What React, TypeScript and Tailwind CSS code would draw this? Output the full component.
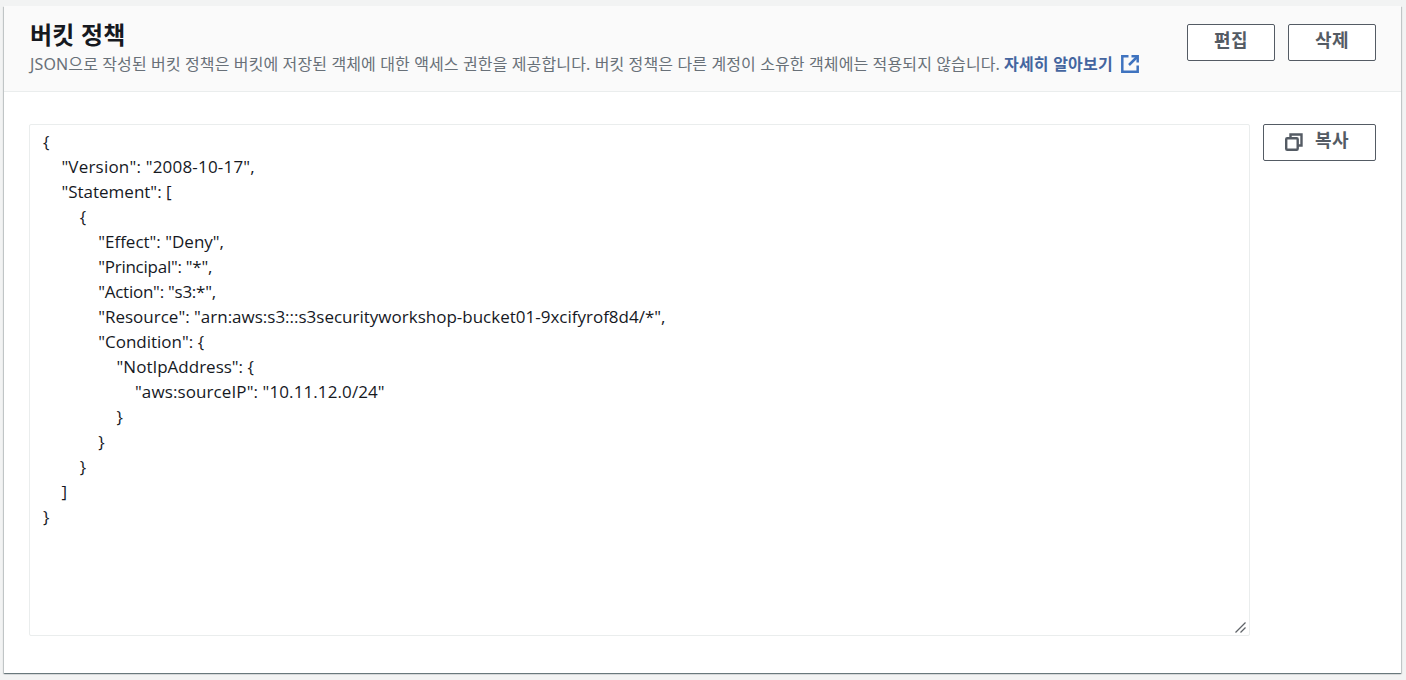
const font = "font-['Noto_Sans','Noto_Sans_CJK_KR',sans-serif]";

function Btn({ children, className = "" }: { children: React.ReactNode; className?: string }) {
  return (
    <button className={`h-[37px] flex items-center justify-center rounded-[2px] border border-[#545b64] bg-white text-[18px] leading-[22px] font-bold tracking-[0.5px] text-[#545b64] pb-[6px] ${className}`}>
      {children}
    </button>
  );
}

function Line({ i, t = "tracking-normal", children }: { i: number; t?: string; children: React.ReactNode }) {
  const pad = ["pl-0", "pl-[18.4px]", "pl-[36.8px]", "pl-[55.2px]", "pl-[73.6px]", "pl-[92px]"][i];
  return <div className={`h-[25px] ${pad} ${t}`}>{children}</div>;
}

export default function App() {
  return (
    <div className={`${font} h-[680px] bg-[#f2f3f3] pt-[6px] pl-[4px] pr-[5px] overflow-hidden`}>
      <div className="h-[667px] bg-white shadow-[0_1px_1px_0_rgba(0,28,36,0.4),1px_1px_1px_0_rgba(0,28,36,0.15),-1px_1px_1px_0_rgba(0,28,36,0.15)] flex flex-col">
        <div className="h-[86px] bg-[#fafafa] border-b border-[#eaeded] flex justify-between pl-[26px] pr-[25px] shrink-0">
          <div>
            <h2 className="mt-[12px] text-[24px] leading-[34px] font-bold tracking-[0.2px] text-[#16191f]">버킷 정책</h2>
            <p className="mt-[1px] text-[16px] leading-[22px] tracking-[0.12px] text-[#687078] flex items-center whitespace-nowrap">
              JSON으로 작성된 버킷 정책은 버킷에 저장된 객체에 대한 액세스 권한을 제공합니다. 버킷 정책은 다른 계정이 소유한 객체에는 적용되지 않습니다.
              <a className="ml-[4px] font-bold tracking-[0.2px] text-[#44659f] flex items-center">
                자세히 알아보기
                <svg className="ml-[8px]" width="18" height="18" viewBox="0 0 18 18" fill="none" stroke="#3f73bf" strokeWidth="2.5">
                  <path d="M7.5 1.3H1.3v15.4h15.4v-6.2" />
                  <path d="M10.5 1.3h6.2v6.2" />
                  <path d="M16.5 1.5 8 10" />
                </svg>
              </a>
            </p>
          </div>
          <div className="flex gap-[13px] pt-[18px]">
            <Btn className="w-[88px]">편집</Btn>
            <Btn className="w-[88px]">삭제</Btn>
          </div>
        </div>
        <div className="flex gap-[13px] pl-[25px] pr-[25px] pt-[32px]">
          <div className="relative w-[1221px] h-[512px] overflow-hidden rounded-[2px] border border-[#eaeded] bg-white pl-[13px] pt-[4px] text-[17px] leading-[25px] text-[#16191f] font-['Open_Sans',sans-serif]">
            <Line i={0}>{"{"}</Line>
            <Line i={1} t="tracking-[0.2px]">"Version": "2008-10-17",</Line>
            <Line i={1}>"Statement": [</Line>
            <Line i={2}>{"{"}</Line>
            <Line i={3}>"Effect": "Deny",</Line>
            <Line i={3} t="tracking-[-0.25px]">"Principal": "*",</Line>
            <Line i={3} t="tracking-[-0.25px]">"Action": "s3:*",</Line>
            <Line i={3}>"Resource": "arn:aws:s3:::s3securityworkshop-bucket01-9xcifyrof8d4/*",</Line>
            <Line i={3}>"Condition": {"{"}</Line>
            <Line i={4}>"NotIpAddress": {"{"}</Line>
            <Line i={5} t="tracking-[0.1px]">"aws:sourceIP": "10.11.12.0/24"</Line>
            <Line i={4}>{"}"}</Line>
            <Line i={3}>{"}"}</Line>
            <Line i={2}>{"}"}</Line>
            <Line i={1}>]</Line>
            <Line i={0}>{"}"}</Line>
            <svg className="absolute right-[3px] bottom-[2px]" width="11" height="11" viewBox="0 0 11 11" fill="none" stroke="#5f6368" strokeWidth="1.2">
              <path d="M0.5 10.5 10.5 0.5" />
              <path d="M5.5 10.5 10.5 5.5" />
            </svg>
          </div>
          <Btn className="w-[113px] gap-[12px] pr-[5px]">
            <svg width="18" height="18" viewBox="0 0 18 18" fill="none" stroke="#545b64" strokeWidth="2.4" className="mt-[5px]">
              <rect x="1.2" y="5.2" width="11.5" height="11.5" rx="1" />
              <path d="M5.5 5V1.5h11v11h-3.8" />
            </svg>
            복사
          </Btn>
        </div>
      </div>
    </div>
  );
}
